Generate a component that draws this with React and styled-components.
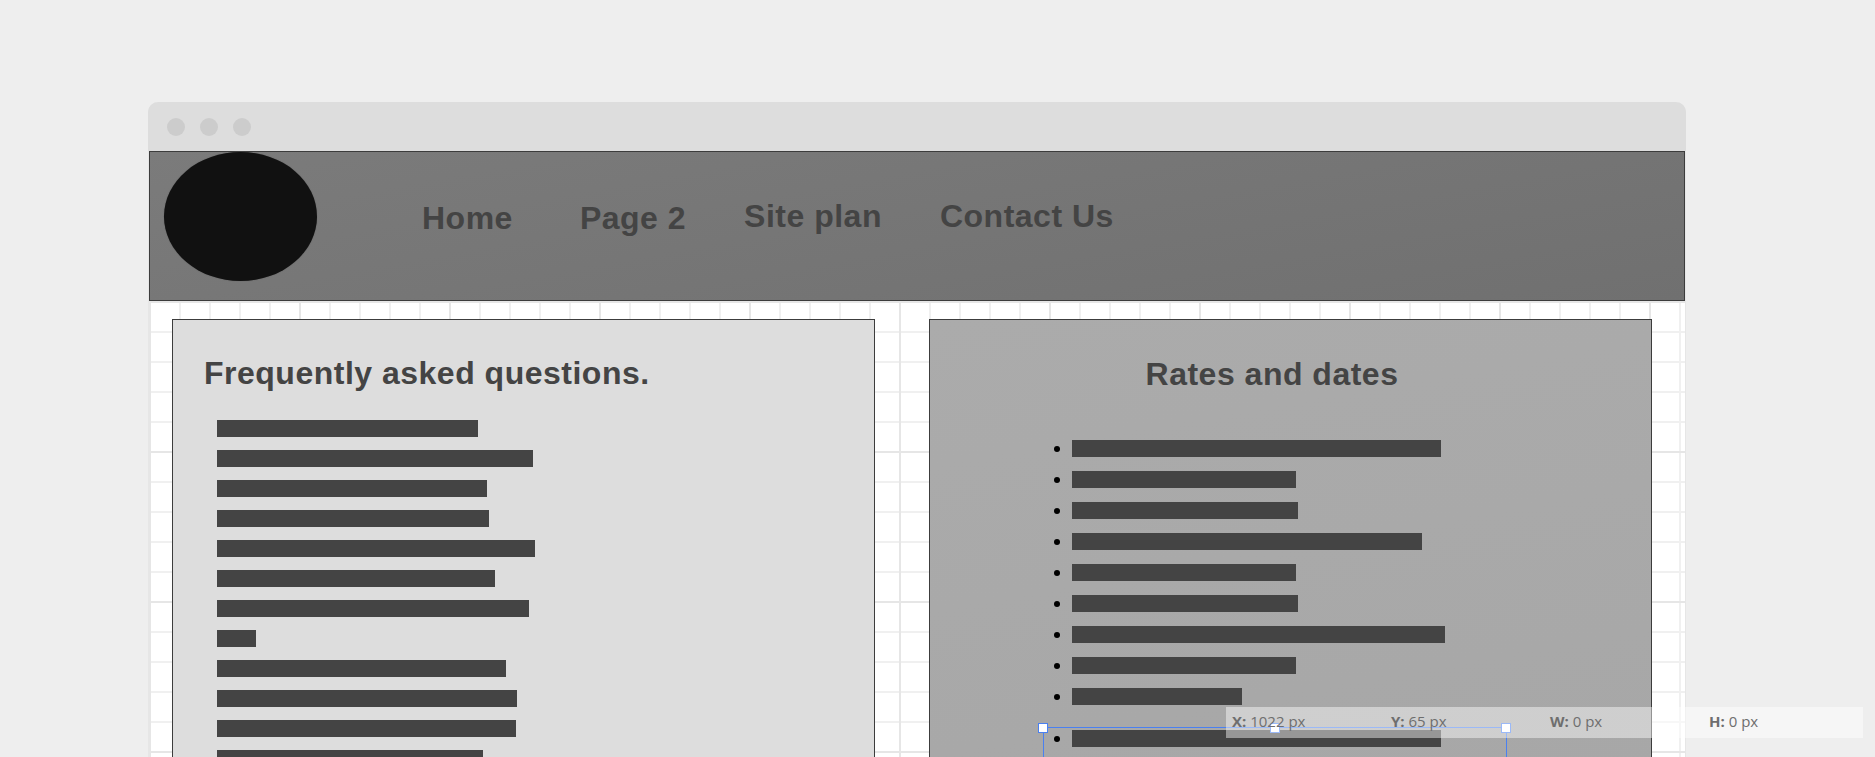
import styled, { createGlobalStyle } from "styled-components";

const GlobalStyle = createGlobalStyle`
  html, body {
    margin: 0;
    padding: 0;
    background: #eeeeee;
  }
`;

const faqLines = [261, 316, 270, 272, 318, 278, 312, 39, 289, 300, 299, 266, 290];
const rateLines = [369, 224, 226, 350, 224, 226, 373, 224, 170];

const App = () => {
  return (
    <Page>
      <GlobalStyle />
      <BrowserWindow>
        <TitleBar>
          <Dot />
          <Dot />
          <Dot />
        </TitleBar>
        <WindowBody>
          <SiteHeader>
            <Logo />
            <Nav>
              <NavLink>Home</NavLink>
              <NavLink $gap={67}>Page 2</NavLink>
              <NavLink $gap={58} $raised>Site plan</NavLink>
              <NavLink $gap={58} $raised>Contact Us</NavLink>
            </Nav>
          </SiteHeader>
          <Columns>
            <FaqPanel>
              <FaqTitle>Frequently asked questions.</FaqTitle>
              <FaqList>
                {faqLines.map((width, i) => (
                  <Bar key={i} $width={width} />
                ))}
              </FaqList>
            </FaqPanel>
            <RatesPanel>
              <RatesTitle>Rates and dates</RatesTitle>
              <RatesList>
                {rateLines.map((width, i) => (
                  <RateRow key={i}>
                    <Bullet />
                    <Bar $width={width} />
                  </RateRow>
                ))}
                <SelectedRow>
                  <Bullet />
                  <Bar $width={369} />
                  <Selection>
                    <Handle $at="left" />
                    <Handle $at="middle" />
                    <Handle $at="right" />
                  </Selection>
                </SelectedRow>
              </RatesList>
            </RatesPanel>
          </Columns>
        </WindowBody>
      </BrowserWindow>
      <Readout>
        <ReadoutCell><b>X:</b> 1022 px</ReadoutCell>
        <ReadoutCell><b>Y:</b> 65 px</ReadoutCell>
        <ReadoutCell><b>W:</b> 0 px</ReadoutCell>
        <ReadoutCell><b>H:</b> 0 px</ReadoutCell>
      </Readout>
    </Page>
  );
};

export default App;

const Page = styled.div`
  position: relative;
  height: 757px;
  padding: 102px 0 0 148px;
  box-sizing: border-box;
  overflow: hidden;
  background: #eeeeee;
  font-family: "Liberation Sans", Arial, sans-serif;
`;

const BrowserWindow = styled.div`
  width: 1538px;
  box-sizing: border-box;
  border: 1px solid #e6e6e6;
  border-top: 0;
  border-radius: 10px 10px 0 0;
`;

const TitleBar = styled.div`
  height: 49px;
  margin: 0 -1px;
  display: flex;
  align-items: center;
  gap: 15px;
  padding-left: 19px;
  background: #dddddd;
  border-radius: 10px 10px 0 0;
`;

const Dot = styled.span`
  width: 18px;
  height: 18px;
  border-radius: 50%;
  background: #cccccc;
`;

const WindowBody = styled.div`
  height: 700px;
  background-color: #ffffff;
  background-image:
    linear-gradient(to right, #e6e6e6 2px, transparent 2px),
    linear-gradient(to bottom, #e6e6e6 2px, transparent 2px),
    linear-gradient(to right, #f0f0f0 2px, transparent 2px),
    linear-gradient(to bottom, #f0f0f0 2px, transparent 2px);
  background-size: 150px 150px, 150px 150px, 30px 30px, 30px 30px;
`;

const SiteHeader = styled.header`
  height: 150px;
  box-sizing: border-box;
  display: flex;
  padding-left: 14px;
  border: 1px solid #3c3c3c;
  background: linear-gradient(170deg, #7b7b7b, #707070);
`;

const Logo = styled.div`
  width: 153px;
  height: 129px;
  flex-shrink: 0;
  border-radius: 50%;
  background: #111111;
  box-shadow: 0 0 1px #555555;
`;

const Nav = styled.nav`
  display: flex;
  align-items: flex-start;
  margin-left: 105px;
  padding-top: 48px;
`;

const NavLink = styled.a`
  margin-left: ${({ $gap }) => $gap || 0}px;
  margin-top: ${({ $raised }) => ($raised ? -2 : 0)}px;
  font-size: 32px;
  line-height: 37px;
  font-weight: 700;
  letter-spacing: 0.5px;
  color: #444444;
  white-space: nowrap;
`;

const Columns = styled.div`
  display: flex;
  align-items: flex-start;
  gap: 54px;
  padding: 18px 0 0 23px;
`;

const Panel = styled.section`
  height: 600px;
  box-sizing: border-box;
  border: 1px solid #3c3c3c;
`;

const FaqPanel = styled(Panel)`
  width: 703px;
  padding: 35px 0 0 44px;
  background: #dddddd;
`;

const RatesPanel = styled(Panel)`
  width: 723px;
  padding-top: 36px;
  background: linear-gradient(170deg, #ababab, #a6a6a6);
`;

const Title = styled.h2`
  margin: 0;
  font-size: 32px;
  line-height: 37px;
  font-weight: 700;
  letter-spacing: 0.5px;
  color: #444444;
`;

const FaqTitle = styled(Title)`
  margin: 0 0 28px -13px;
`;

const RatesTitle = styled(Title)`
  padding-right: 37px;
  text-align: center;
`;

const FaqList = styled.div`
  display: flex;
  flex-direction: column;
  gap: 13px;
`;

const Bar = styled.div`
  width: ${({ $width }) => $width}px;
  height: 17px;
  background: #444444;
`;

const RatesList = styled.ul`
  display: flex;
  flex-direction: column;
  gap: 14px;
  margin: 47px 0 0;
  padding: 0 0 0 124px;
  list-style: none;
`;

const RateRow = styled.li`
  display: flex;
  align-items: center;
  gap: 12px;
`;

const SelectedRow = styled(RateRow)`
  position: relative;
  margin-top: 11px;
`;

const Bullet = styled.span`
  width: 6px;
  height: 6px;
  border-radius: 50%;
  background: #000000;
`;

const Selection = styled.div`
  position: absolute;
  top: -3px;
  left: -11px;
  width: 464px;
  height: 60px;
  box-sizing: border-box;
  border: 1px solid #4a80f0;
`;

const handleOffset = { left: "-6px", middle: "calc(50% - 5px)", right: "calc(100% - 5px)" };

const Handle = styled.span`
  position: absolute;
  top: -5px;
  left: ${({ $at }) => handleOffset[$at]};
  width: 10px;
  height: 10px;
  box-sizing: border-box;
  border: 1px solid #4a80f0;
  background: #ffffff;
`;

const Readout = styled.div`
  position: absolute;
  top: 707px;
  left: 1226px;
  width: 637px;
  height: 31px;
  display: grid;
  grid-template-columns: repeat(4, 159px);
  background: rgba(255, 255, 255, 0.447);
  font-family: "Open Sans", sans-serif;
  font-size: 15px;
  line-height: 28px;
  color: #6e6e6e;
`;

const ReadoutCell = styled.div`
  padding-left: 6px;
  white-space: nowrap;
`;
